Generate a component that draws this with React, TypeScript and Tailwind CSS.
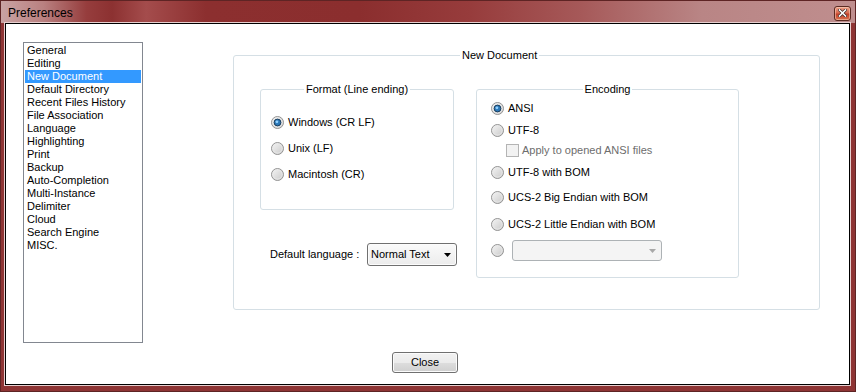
import type { ReactNode } from 'react'

const categories = [
  'General',
  'Editing',
  'New Document',
  'Default Directory',
  'Recent Files History',
  'File Association',
  'Language',
  'Highlighting',
  'Print',
  'Backup',
  'Auto-Completion',
  'Multi-Instance',
  'Delimiter',
  'Cloud',
  'Search Engine',
  'MISC.',
]

function Radio({ checked }: { checked?: boolean }) {
  return (
    <svg width="13" height="13" viewBox="0 0 13 13" className="shrink-0">
      <defs>
        <linearGradient id="radioFill" x1="0" y1="0" x2="1" y2="1">
          <stop offset="0" stopColor="#f6f6f6" />
          <stop offset="1" stopColor="#c8c8c8" />
        </linearGradient>
      </defs>
      <circle cx="6.5" cy="6.5" r="6" fill="url(#radioFill)" stroke="#939393" />
      <circle cx="6.5" cy="6.5" r="4.6" fill="none" stroke="#e9e9e9" strokeWidth="0.8" />
      {checked && (
        <>
          <circle cx="6.5" cy="6.5" r="3.4" fill="#2b78b8" stroke="#1d3f5e" strokeWidth="1" />
          <circle cx="5.9" cy="5.8" r="1.4" fill="#8fd0ff" />
        </>
      )}
    </svg>
  )
}

function RadioRow({ label, checked, className }: { label: string; checked?: boolean; className?: string }) {
  return (
    <div className={`flex items-center h-[13px] leading-[13px] ${className ?? ''}`}>
      <Radio checked={checked} />
      <span className="ml-[4px] whitespace-nowrap">{label}</span>
    </div>
  )
}

function GroupBox({ title, className, legendClass, children }: { title: string; className: string; legendClass?: string; children?: ReactNode }) {
  return (
    <fieldset className={`border border-[#d5dfe5] rounded-[3px] ${className}`}>
      <legend className={`leading-[13px] px-[2px] ${legendClass ?? 'mx-auto'}`}>{title}</legend>
      {children}
    </fieldset>
  )
}

export default function App() {
  return (
    <div className="w-[856px] h-[392px] flex flex-col bg-[#8e3434] border border-[#5e2424] font-['Liberation_Sans',Arial,sans-serif] text-[11px] text-black">
      {/* title bar */}
      <div className="h-[22px] flex items-center justify-between pl-[7px] pr-[4px] bg-[linear-gradient(90deg,#c9a3a3_0%,#b98080_5%,#963d3d_10%,#8c3131_13%,#a44c4c_17%,#8c2f2f_24%,#8b2e2e_42%,#973c3c_55%,#a65959_68%,#b98585_82%,#bf8e8e_100%)]">
        <span className="text-[12px] leading-none pt-[1px]">Preferences</span>
        <div className="w-[17px] h-[15px] mt-[2px] rounded-[3px] border border-[#5b2a22] bg-[linear-gradient(180deg,#eda088_0%,#d86a50_45%,#c2412a_55%,#d8704e_100%)] flex items-center justify-center shadow-[inset_0_0_0_1px_rgba(255,220,200,0.5)]">
          <svg width="9" height="8" viewBox="0 0 9 8">
            <path d="M1.5 1 L7.5 7 M7.5 1 L1.5 7" stroke="#3a2a2a" strokeWidth="3" strokeLinecap="square" />
            <path d="M1.5 1 L7.5 7 M7.5 1 L1.5 7" stroke="#ffffff" strokeWidth="1.6" strokeLinecap="square" />
          </svg>
        </div>
      </div>

      {/* client area */}
      <div className="ml-[4px] mr-[5px] mb-[6px] h-[362px] bg-white border border-black shadow-[0_0_0_1px_#e7cfcf] flex flex-col">
        <div className="flex items-start pl-[17px] pt-[18px]">
          {/* category list */}
          <div className="w-[120px] h-[301px] border border-[#828790] pt-[1px] px-[1px]">
            {categories.map(name => (
              <div
                key={name}
                className={`h-[13px] leading-[13px] pl-[2px] whitespace-nowrap ${name === 'New Document' ? 'bg-[#3399ff] text-white' : ''}`}
              >
                {name}
              </div>
            ))}
          </div>

          {/* New Document panel */}
          <GroupBox title="New Document" className="ml-[90px] mt-[7px] w-[587px] h-[261px]" legendClass="ml-[226px]">
            <div className="flex items-start pl-[26px] mt-[21px]">
              <div className="flex flex-col w-[194px] shrink-0">
                <GroupBox title="Format (Line ending)" className="w-[194px] h-[127px]">
                  <div className="flex flex-col gap-[13px] pl-[10px] pt-[20px]">
                    <RadioRow label="Windows (CR LF)" checked />
                    <RadioRow label="Unix (LF)" />
                    <RadioRow label="Macintosh (CR)" />
                  </div>
                </GroupBox>

                <div className="flex items-center mt-[33px] pl-[10px] w-[200px]">
                  <span className="w-[97px] shrink-0 whitespace-nowrap">Default language :</span>
                  <div className="w-[90px] h-[23px] shrink-0 rounded-[3px] border border-[#707070] bg-[linear-gradient(180deg,#fafafa,#ececec)] flex items-center justify-between pl-[3px] pr-[5px] shadow-[inset_0_0_0_1px_#fcfcfc]">
                    <span className="whitespace-nowrap">Normal Text</span>
                    <svg width="7" height="4" viewBox="0 0 7 4">
                      <path d="M0 0 H7 L3.5 4 Z" fill="#000" />
                    </svg>
                  </div>
                </div>
              </div>

              <GroupBox title="Encoding" className="ml-[22px] w-[263px] h-[195px]">
                <div className="flex flex-col pl-[14px]">
                  <RadioRow label="ANSI" checked className="mt-[6px]" />
                  <RadioRow label="UTF-8" className="mt-[9px]" />
                  <div className="flex items-center h-[13px] leading-[13px] mt-[7px] pl-[15px] text-[#6d6d6d]">
                    <div className="w-[13px] h-[13px] border border-[#b4b4b4] bg-[#f2f2f2] shrink-0" />
                    <span className="ml-[3px] whitespace-nowrap">Apply to opened ANSI files</span>
                  </div>
                  <RadioRow label="UTF-8 with BOM" className="mt-[9px]" />
                  <RadioRow label="UCS-2 Big Endian with BOM" className="mt-[12px]" />
                  <RadioRow label="UCS-2 Little Endian with BOM" className="mt-[14px]" />
                  <div className="flex items-center mt-[9px]">
                    <Radio />
                    <div className="ml-[8px] w-[150px] h-[21px] rounded-[3px] border border-[#adb2b5] bg-[#f4f4f4] flex items-center justify-end pr-[5px]">
                      <svg width="7" height="4" viewBox="0 0 7 4">
                        <path d="M0 0 H7 L3.5 4 Z" fill="#a8a8a8" />
                      </svg>
                    </div>
                  </div>
                </div>
              </GroupBox>
            </div>
          </GroupBox>
        </div>

        <div className="flex mt-[9px] pl-[386px]">
          <button className="w-[66px] h-[21px] rounded-[3px] border border-[#707070] bg-[linear-gradient(180deg,#f2f2f2_0%,#ebebeb_50%,#dddddd_51%,#cfcfcf_100%)] shadow-[inset_0_0_0_1px_#fbfbfb] leading-none">
            Close
          </button>
        </div>
      </div>
    </div>
  )
}
